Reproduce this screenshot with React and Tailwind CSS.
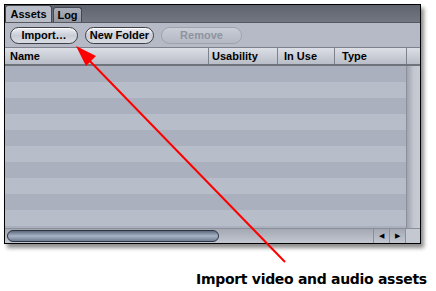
import React from "react";

const rows = Array.from({ length: 11 });

const Pill = ({ children, disabled, w }) => (
  <div
    className={`${w} h-[17px] rounded-full border flex items-center justify-center text-[11px] font-bold ${
      disabled
        ? "border-[#9da2ad] text-[#8e939e] bg-gradient-to-b from-[#c9cdd6] to-[#b3b8c3]"
        : "border-[#3c3f46] text-black bg-gradient-to-b from-[#eef0f4] via-[#c9cdd6] to-[#d9dce3] shadow-[inset_0_1px_0_#fff]"
    }`}
  >
    {children}
  </div>
);

const App = () => {
  return (
    <div className="relative w-[436px] h-[291px] bg-white overflow-hidden font-['Liberation_Sans',sans-serif]">
      <div className="ml-[4px] mt-[4px] w-[417px] h-[240px] border border-black flex flex-col shadow-[3px_4px_4px_rgba(0,0,0,0.45)] bg-[#b4b9c5]">
        {/* tab strip */}
        <div className="h-[18px] flex items-end bg-gradient-to-b from-[#5f636d] to-[#737782] border-b border-[#55585f]">
          <div className="ml-[0px] w-[47px] h-[17px] rounded-t-[3px] bg-[#b9bdc8] border border-b-0 border-[#45484f] flex items-center justify-center text-[11px] font-bold text-black">
            Assets
          </div>
          <div className="ml-[1px] w-[29px] h-[15px] rounded-t-[3px] bg-gradient-to-b from-[#a9aeb9] to-[#9297a2] border border-b-0 border-[#45484f] flex items-center justify-center text-[11px] font-bold text-black">
            Log
          </div>
        </div>
        {/* toolbar */}
        <div className="h-[25px] flex items-center gap-[7px] pl-[5px] bg-[#b6bac6] border-b border-[#7d818b]">
          <Pill w="w-[68px]">Import…</Pill>
          <Pill w="w-[69px]">New Folder</Pill>
          <Pill w="w-[81px]" disabled>
            Remove
          </Pill>
        </div>
        {/* header */}
        <div className="h-[18px] flex text-[11px] font-bold text-black bg-gradient-to-b from-[#dcdfe6] to-[#b9bdc7] border-b-2 border-[#6f737c]">
          <div className="w-[204px] pl-[5px] flex items-center border-r border-[#7e828c]">Name</div>
          <div className="w-[69px] pl-[3px] flex items-center border-r border-[#7e828c]">Usability</div>
          <div className="w-[57px] pl-[6px] flex items-center border-r border-[#7e828c]">In Use</div>
          <div className="w-[72px] pl-[7px] flex items-center border-r border-[#7e828c]">Type</div>
          <div className="flex-1" />
        </div>
        {/* body */}
        <div className="flex-1 flex overflow-hidden">
          <div className="flex-1 flex flex-col">
            {rows.map((_, i) => (
              <div
                key={i}
                className={`h-[16px] shrink-0 ${i % 2 === 0 ? "bg-[#aab0bd]" : "bg-[#b7bdc9]"}`}
              />
            ))}
          </div>
          <div className="w-[14px] border-l border-[#8a8f9a] bg-gradient-to-r from-[#9ea3ae] via-[#c2c6cf] to-[#c9ccd4]" />
        </div>
        {/* horizontal scrollbar */}
        <div className="h-[15px] flex items-center bg-gradient-to-b from-[#a3a8b3] to-[#c3c7d0] border-t border-[#8a8f9a]">
          <div className="ml-[2px] w-[212px] h-[12px] rounded-full border border-[#2e3440] bg-gradient-to-b from-[#5d6a80] via-[#a8b4c6] to-[#6f7c92]" />
          <div className="flex-1 h-[12px] mr-[0px] rounded-r-full" />
          <div className="w-[16px] h-full flex items-center justify-center border-l border-[#8a8f9a] text-[7px] text-black">◀</div>
          <div className="w-[16px] h-full flex items-center justify-center border-l border-[#8a8f9a] text-[7px] text-black">▶</div>
          <div className="w-[15px] h-full border-l border-[#8a8f9a] bg-[#c4c8d0]" />
        </div>
      </div>

      <div className="absolute left-[196px] top-[269px] text-[14px] font-bold text-black font-['DejaVu_Sans',sans-serif] tracking-[-0.3px] whitespace-nowrap">
        Import video and audio assets
      </div>

      <svg className="absolute left-0 top-0" width="436" height="291">
        <line x1="84" y1="55" x2="285" y2="262" stroke="#ff0000" strokeWidth="2" />
        <polygon points="76,46 96,56 86,66" fill="#ff0000" />
      </svg>
    </div>
  );
};

export default App;
